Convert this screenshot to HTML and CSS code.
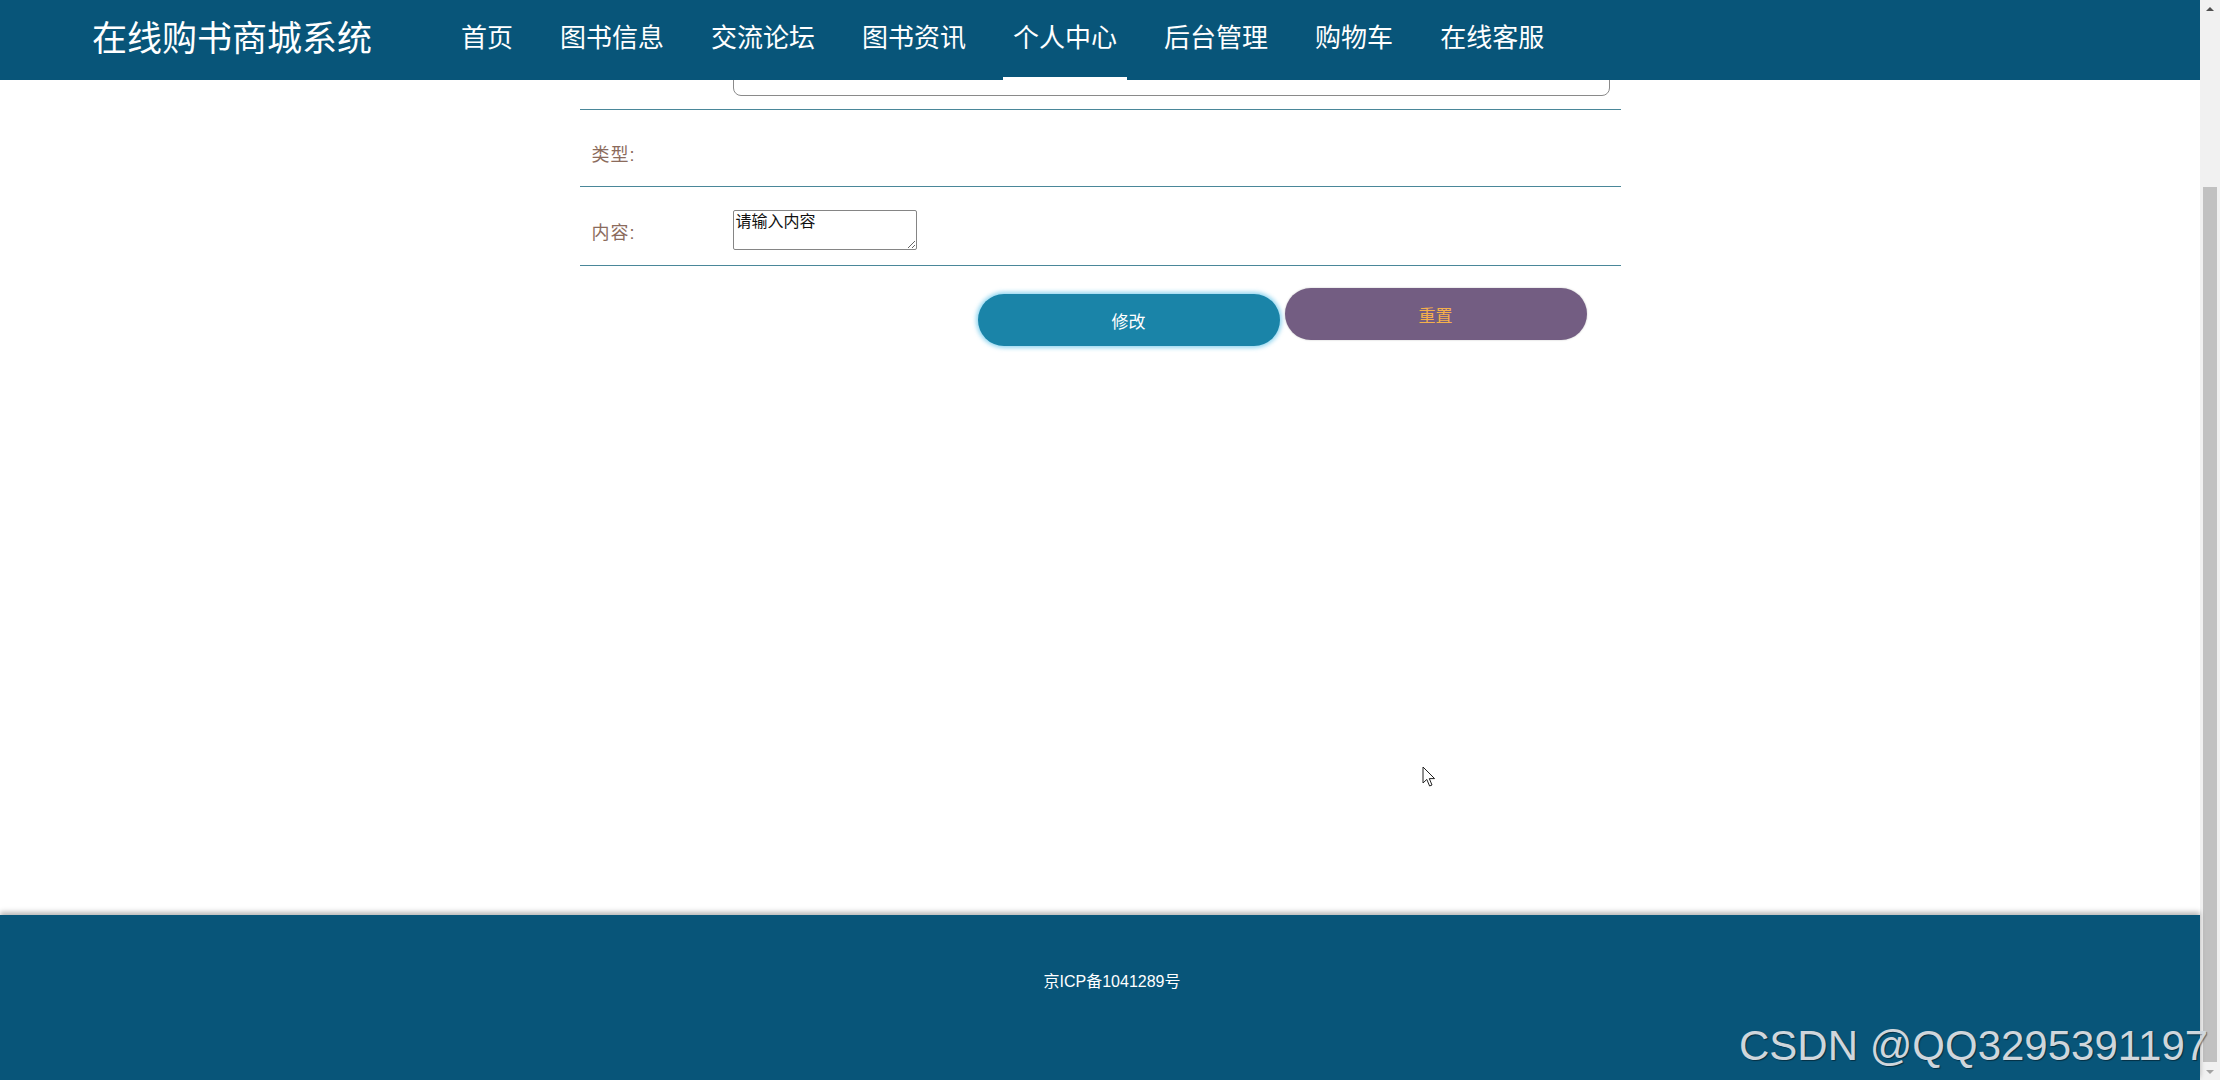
FILE: index.html
```html
<!DOCTYPE html>
<html lang="zh-CN">
<head>
<meta charset="utf-8">
<title>在线购书商城系统</title>
<link rel="stylesheet" href="styles.css">
</head>
<body>
<div class="window">
  <div class="page">
    <header class="header">
      <div class="brand">在线购书商城系统</div>
      <nav class="nav">
        <a class="nav-item">首页</a>
        <a class="nav-item">图书信息</a>
        <a class="nav-item">交流论坛</a>
        <a class="nav-item">图书资讯</a>
        <a class="nav-item active">个人中心</a>
        <a class="nav-item">后台管理</a>
        <a class="nav-item">购物车</a>
        <a class="nav-item">在线客服</a>
      </nav>
    </header>
    <main class="main">
      <form class="form">
        <div class="row row-clipped">
          <div class="label"></div>
          <div class="field"><div class="text-input"></div></div>
        </div>
        <div class="row row-type">
          <div class="label"><span>类型:</span></div>
          <div class="field"></div>
        </div>
        <div class="row row-content">
          <div class="label"><span>内容:</span></div>
          <div class="field"><textarea class="textarea">请输入内容</textarea></div>
        </div>
        <div class="actions">
          <button type="button" class="btn btn-edit">修改</button>
          <button type="button" class="btn btn-reset">重置</button>
        </div>
      </form>
    </main>
    <footer class="footer">
      <p class="icp">京ICP备1041289号</p>
    </footer>
  </div>
  <div class="scrollbar">
    <div class="sb-arrow sb-up"></div>
    <div class="sb-track"><div class="sb-thumb"></div></div>
    <div class="sb-arrow sb-down"></div>
  </div>
</div>
<div class="watermark">CSDN @QQ3295391197</div>
<svg class="cursor" width="14" height="22" viewBox="0 0 14 22"><path d="M1 1 L1 17 L4.8 13.4 L7.6 20 L10 19 L7.3 12.6 L12.6 12.6 Z" fill="#fff" stroke="#222" stroke-width="1" stroke-linejoin="round"/></svg>
</body>
</html>
```

FILE: styles.css
```css
* { box-sizing: border-box; }

html, body {
  margin: 0;
  padding: 0;
  height: 1080px;
  overflow: hidden;
}

body {
  position: relative;
  font-family: "Liberation Sans", "Noto Sans CJK SC", sans-serif;
  background: #ffffff;
  color: #333;
}

.window {
  display: flex;
  height: 1080px;
}

.page {
  flex: 1;
  display: flex;
  flex-direction: column;
  min-width: 0;
}

/* Header */
.header {
  height: 80px;
  background: #085579;
  display: flex;
  align-items: center;
  padding-left: 92px;
  position: relative;
  z-index: 2;
}

.brand {
  color: #ffffff;
  font-size: 35px;
  line-height: 40px;
  padding-bottom: 3px;
  white-space: nowrap;
}

.nav {
  display: flex;
  gap: 27px;
  margin-left: 79px;
  height: 80px;
}

.nav-item {
  color: #ffffff;
  font-size: 26px;
  line-height: 77px;
  padding: 0 10px;
  border-bottom: 3px solid transparent;
  white-space: nowrap;
}

.nav-item.active {
  border-bottom-color: #ffffff;
}

/* Main */
.main {
  flex: 1;
  overflow: hidden;
}

.form {
  width: 1041px;
  margin: 0 auto;
}

.row {
  display: flex;
  align-items: center;
  border-bottom: 1px solid #4a8799;
}

.label {
  width: 153px;
  flex: none;
  padding-left: 12px;
  color: #8b6b5c;
  font-size: 18px;
  margin-top: 10px;
}

.label span {
  letter-spacing: 1px;
}

.field {
  flex: 1;
}

.row-clipped {
  height: 30px;
  overflow: hidden;
  align-items: flex-end;
  padding-bottom: 13px;
}

.row-clipped .label {
  margin-top: 0;
}

.text-input {
  width: 877px;
  height: 48px;
  border: 1px solid #8a8a8a;
  border-radius: 8px;
  background: #fff;
}

.row-type {
  height: 77px;
}

.row-content {
  padding: 23px 0 15px;
}

.row-content .label {
  margin-top: 1px;
}

.textarea {
  display: block;
  width: 184px;
  height: 40px;
  margin: 0;
  padding: 1px 2px;
  border: 1px solid #858585;
  border-radius: 2px;
  font-family: "Liberation Sans", "Noto Sans CJK SC", sans-serif;
  font-size: 16px;
  line-height: 20px;
  color: #111;
  background: #fff;
}

.actions {
  display: flex;
  align-items: flex-start;
  gap: 5px;
  padding: 22px 0 0 398px;
}

.btn {
  width: 302px;
  height: 52px;
  border: none;
  border-radius: 26px;
  font-family: "Liberation Sans", "Noto Sans CJK SC", sans-serif;
  font-size: 17px;
  cursor: pointer;
}

.btn-edit {
  margin-top: 6px;
  background: #1a84a8;
  color: #ffffff;
  box-shadow: 0 0 4px 2px rgba(110, 200, 235, 0.75);
}

.btn-reset {
  background: #735d82;
  color: #f4b04b;
  box-shadow: 0 0 2px rgba(0, 0, 0, 0.25);
}

/* Footer */
.footer {
  height: 165px;
  background: #085579;
  box-shadow: 0 -3px 5px rgba(0, 0, 0, 0.28);
  display: flex;
  justify-content: center;
  position: relative;
}

.icp {
  margin: 57px 0 0 24px;
  color: #ffffff;
  font-size: 16px;
  line-height: 20px;
}

/* Scrollbar */
.scrollbar {
  width: 20px;
  flex: none;
  background: #f1f1f1;
  display: flex;
  flex-direction: column;
}

.sb-arrow {
  height: 17px;
  display: flex;
  align-items: center;
  justify-content: center;
}

.sb-up::before {
  content: "";
  border-left: 4px solid transparent;
  border-right: 4px solid transparent;
  border-bottom: 4px solid #505050;
}

.sb-down::before {
  content: "";
  border-left: 4px solid transparent;
  border-right: 4px solid transparent;
  border-top: 4px solid #a3a3a3;
}

.sb-track {
  flex: 1;
  padding: 170px 3px 1px;
  display: flex;
}

.sb-thumb {
  flex: 1;
  background: #c1c1c1;
}

/* Overlays */
.watermark {
  position: absolute;
  left: 1739px;
  top: 1025px;
  font-family: "Liberation Sans", sans-serif;
  font-size: 42px;
  line-height: 42px;
  color: #cfd6dc;
  text-shadow: 1px 1px 1px rgba(0, 0, 0, 0.45);
  white-space: nowrap;
  z-index: 5;
}

.cursor {
  position: absolute;
  left: 1422px;
  top: 766px;
  z-index: 6;
}
```
